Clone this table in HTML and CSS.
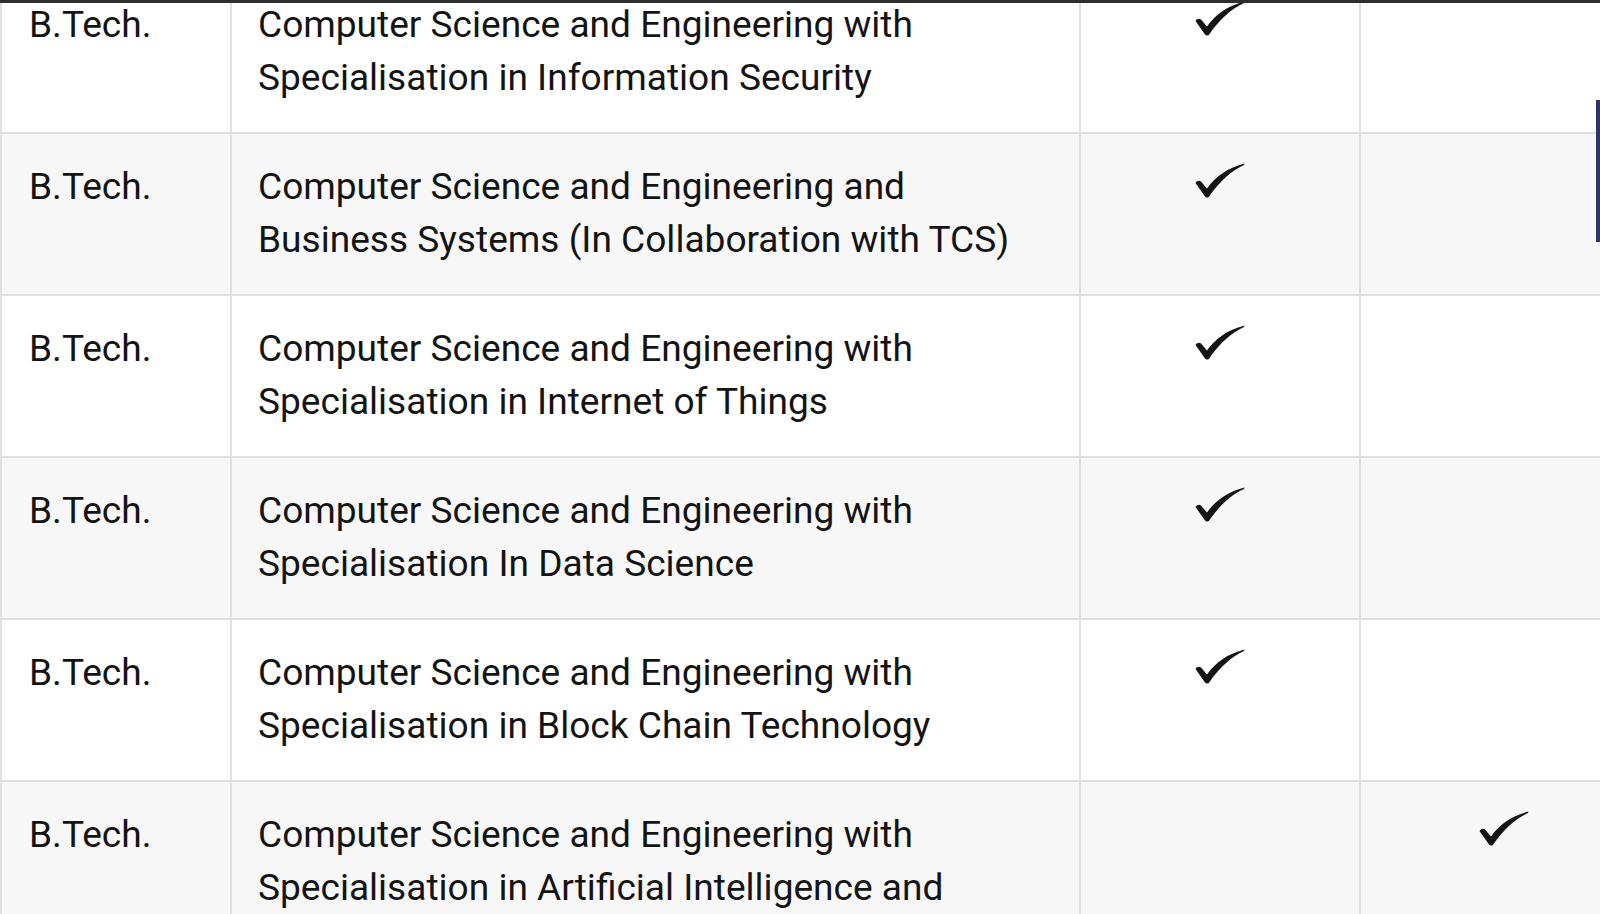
FILE: index.html
```html
<!DOCTYPE html>
<html lang="en">
<head>
<meta charset="utf-8">
<title>Programmes</title>
<link rel="stylesheet" href="styles.css">
</head>
<body>
<div class="frame">
  <table class="programmes">
    <colgroup>
      <col class="c-degree">
      <col class="c-name">
      <col class="c-a">
      <col class="c-b">
    </colgroup>
    <tbody>
      <tr>
        <td class="degree">B.Tech.</td>
        <td class="name">Computer Science and Engineering with<br>Specialisation in Information Security</td>
        <td class="mark"><svg class="check" viewBox="0 0 50 36"><path d="M0.5 20 C2 17.5 4.5 17 6 18.5 L12 25.5 C20 14 32 5 49.5 0.5 L49 2 C36 8 25 18 14.5 33 C13.5 35 11 35 10 33.5 Z"/></svg></td>
        <td class="mark"></td>
      </tr>
      <tr class="alt">
        <td class="degree">B.Tech.</td>
        <td class="name">Computer Science and Engineering and<br>Business Systems (In Collaboration with TCS)</td>
        <td class="mark"><svg class="check" viewBox="0 0 50 36"><path d="M0.5 20 C2 17.5 4.5 17 6 18.5 L12 25.5 C20 14 32 5 49.5 0.5 L49 2 C36 8 25 18 14.5 33 C13.5 35 11 35 10 33.5 Z"/></svg></td>
        <td class="mark"></td>
      </tr>
      <tr>
        <td class="degree">B.Tech.</td>
        <td class="name">Computer Science and Engineering with<br>Specialisation in Internet of Things</td>
        <td class="mark"><svg class="check" viewBox="0 0 50 36"><path d="M0.5 20 C2 17.5 4.5 17 6 18.5 L12 25.5 C20 14 32 5 49.5 0.5 L49 2 C36 8 25 18 14.5 33 C13.5 35 11 35 10 33.5 Z"/></svg></td>
        <td class="mark"></td>
      </tr>
      <tr class="alt">
        <td class="degree">B.Tech.</td>
        <td class="name">Computer Science and Engineering with<br>Specialisation In Data Science</td>
        <td class="mark"><svg class="check" viewBox="0 0 50 36"><path d="M0.5 20 C2 17.5 4.5 17 6 18.5 L12 25.5 C20 14 32 5 49.5 0.5 L49 2 C36 8 25 18 14.5 33 C13.5 35 11 35 10 33.5 Z"/></svg></td>
        <td class="mark"></td>
      </tr>
      <tr>
        <td class="degree">B.Tech.</td>
        <td class="name">Computer Science and Engineering with<br>Specialisation in Block Chain Technology</td>
        <td class="mark"><svg class="check" viewBox="0 0 50 36"><path d="M0.5 20 C2 17.5 4.5 17 6 18.5 L12 25.5 C20 14 32 5 49.5 0.5 L49 2 C36 8 25 18 14.5 33 C13.5 35 11 35 10 33.5 Z"/></svg></td>
        <td class="mark"></td>
      </tr>
      <tr class="alt">
        <td class="degree">B.Tech.</td>
        <td class="name">Computer Science and Engineering with<br>Specialisation in Artificial Intelligence and<br>Machine Learning</td>
        <td class="mark"></td>
        <td class="mark"><svg class="check" viewBox="0 0 50 36"><path d="M0.5 20 C2 17.5 4.5 17 6 18.5 L12 25.5 C20 14 32 5 49.5 0.5 L49 2 C36 8 25 18 14.5 33 C13.5 35 11 35 10 33.5 Z"/></svg></td>
      </tr>
    </tbody>
  </table>
  <div class="scroll-thumb"></div>
</div>
</body>
</html>
```

FILE: styles.css
```css
html, body {
  margin: 0;
  padding: 0;
  background: #ffffff;
  overflow: hidden;
}

.frame {
  position: relative;
  width: 1600px;
  height: 914px;
  overflow: hidden;
  border-top: 3px solid #2e2e2e;
  box-sizing: border-box;
}

.programmes {
  border-collapse: collapse;
  table-layout: fixed;
  width: 1646px;
  margin-top: -33px;
  margin-left: 0;
  font-family: Roboto, "Liberation Sans", sans-serif;
  font-size: 37.1px;
  line-height: 53px;
  color: #141414;
}

.c-degree { width: 230px; }
.c-name { width: 849px; }
.c-a { width: 280px; }
.c-b { width: 287px; }

.programmes td {
  border: 2px solid #dfdfdf;
  height: 162px;
  box-sizing: border-box;
  vertical-align: top;
  padding: 26px 0 0 0;
}

.programmes tr {
  background: #ffffff;
}

.programmes tr.alt {
  background: #f7f7f7;
}

.programmes td.degree {
  padding-left: 27px;
}

.programmes td.name {
  padding-left: 26px;
  white-space: nowrap;
}

.programmes td.mark {
  text-align: center;
  padding-top: 26px;
}

.check {
  display: inline-block;
  width: 50px;
  height: 36px;
  fill: #151515;
}

.scroll-thumb {
  position: absolute;
  right: 0;
  top: 97px;
  width: 4px;
  height: 142px;
  background: #2d3566;
}
```
